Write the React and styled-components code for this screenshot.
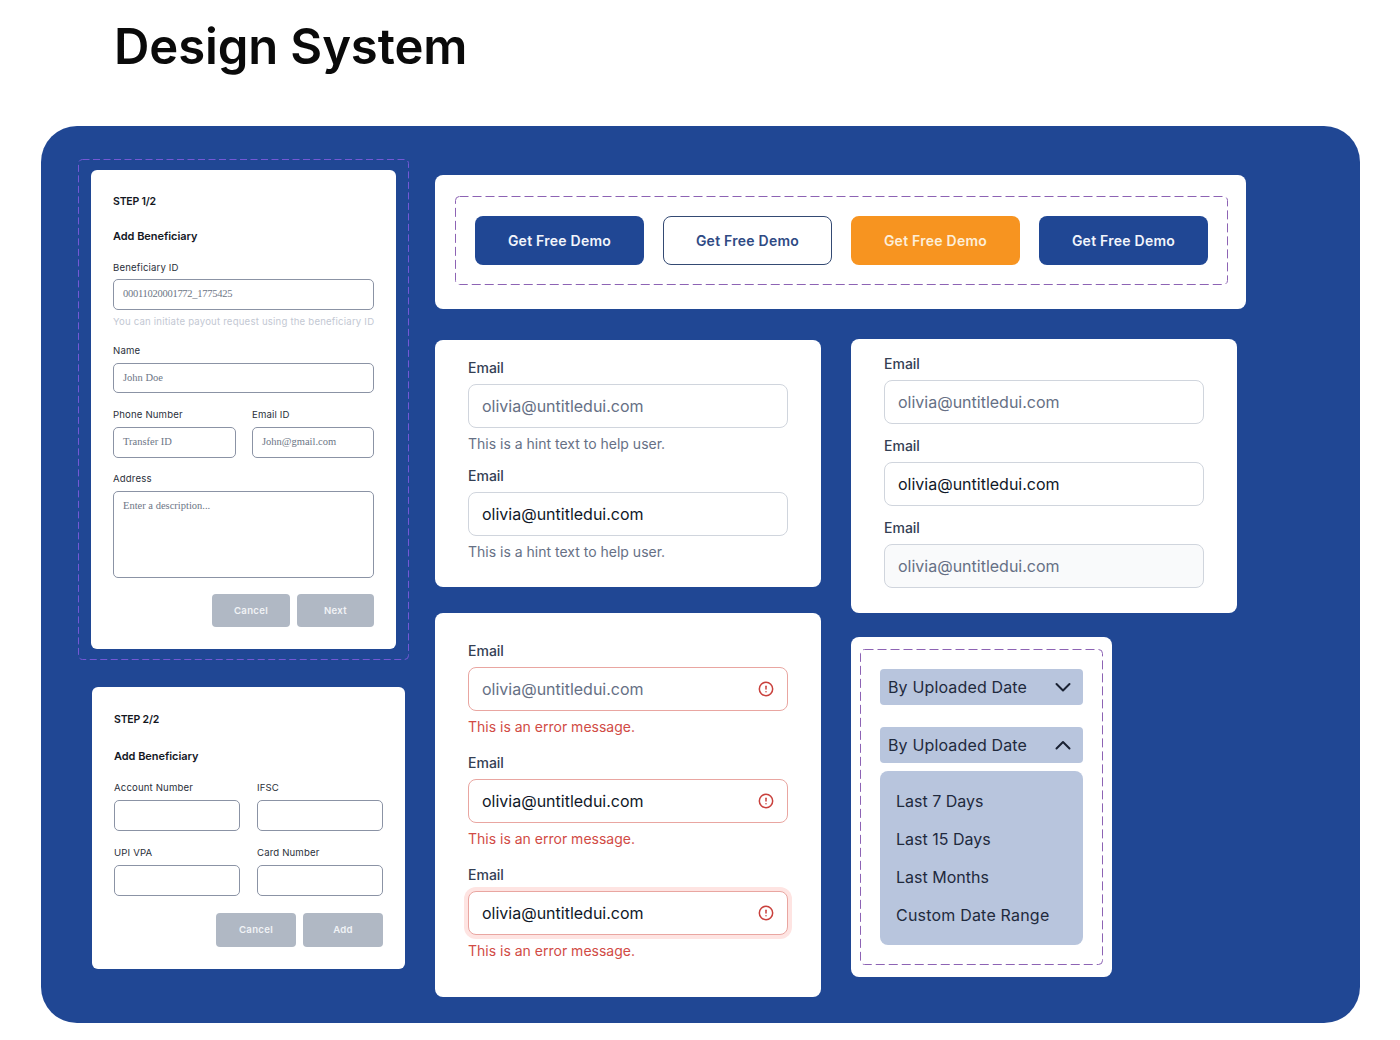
import React from "react"
import styled, { createGlobalStyle } from "styled-components"

const GlobalStyle = createGlobalStyle`
    * { box-sizing: border-box; }
    html, body { margin: 0; padding: 0; background: #fff; }
`

const BLUE = '#204794'
const SANS = `Inter, "Liberation Sans", sans-serif`

const Page = styled.div`
    width: 1400px;
    height: 1040px;
    padding-left: 41px;
    overflow: hidden;
    font-family: ${SANS};
`

const Title = styled.h1`
    margin: 0 0 32px 73px;
    height: 94px;
    line-height: 94px;
    font-family: ${SANS};
    font-size: 49px;
    font-weight: 600;
    letter-spacing: -0.1px;
    color: #0a0a0a;
`

const Panel = styled.div`
    display: flex;
    width: 1319px;
    height: 897px;
    padding: 33px 0 0 37px;
    background: ${BLUE};
    border-radius: 36px;
`

const LeftColumn = styled.div`
    display: flex;
    flex-direction: column;
    width: 357px;
    flex: none;
`

const Dashed = styled.div`
    position: relative;
`

const DashSvg = styled.svg`
    position: absolute;
    top: 0;
    left: 0;
    width: 100%;
    height: 100%;
    pointer-events: none;
    overflow: visible;
`

const DashRect = styled.rect`
    x: 0.5px;
    y: 0.5px;
    width: calc(100% - 1px);
    height: calc(100% - 1px);
    fill: none;
    stroke: ${p => p.$color};
    stroke-width: 1;
    stroke-dasharray: ${p => p.$dash};
`

const DashFrame = ({ color = '#8d63b4', dash = '9 4' }) => (
    <DashSvg aria-hidden="true">
        <DashRect rx="4" $color={color} $dash={dash} />
    </DashSvg>
)

const StepOneFrame = styled(Dashed)`
    width: 331px;
    height: 501px;
    padding: 11px 13px;
    margin-bottom: 27px;
`

const FormCard = styled.div`
    display: flex;
    flex-direction: column;
    background: #fff;
    border-radius: 6px;
    padding: ${p => p.$padding};
    width: ${p => p.$width}px;
    height: ${p => p.$height}px;
    margin-left: ${p => p.$left || 0}px;
`

const Step = styled.div`
    font-size: 10.5px;
    line-height: 14px;
    font-weight: 600;
    letter-spacing: -0.2px;
    color: #14171f;
`

const FormTitle = styled.div`
    margin-top: ${p => p.$top}px;
    font-size: 11px;
    line-height: 14px;
    font-weight: 600;
    letter-spacing: -0.05px;
    color: #14171f;
`

const SmallLabel = styled.div`
    margin-top: ${p => p.$top}px;
    margin-bottom: ${p => p.$bottom}px;
    font-size: 9.6px;
    line-height: 12px;
    letter-spacing: 0.15px;
    color: #2a2f3a;
`

const SmallInput = styled.div`
    display: flex;
    align-items: ${p => (p.$area ? 'flex-start' : 'center')};
    height: ${p => p.$height || 31}px;
    padding: ${p => (p.$area ? '8px 9px' : '0 9px 2px')};
    border: 1px solid #8b93a5;
    border-radius: 5px;
    font-family: "Liberation Serif", serif;
    font-size: 10.5px;
    letter-spacing: ${p => (p.$digits ? '-0.27px' : '0')};
    color: #6d7686;
`

const FieldHint = styled.div`
    margin-top: 6px;
    font-size: 9.6px;
    line-height: 12px;
    letter-spacing: 0.2px;
    white-space: nowrap;
    color: #c3c8d3;
`

const TwoCols = styled.div`
    display: grid;
    grid-template-columns: ${p => p.$cols};
    column-gap: ${p => p.$gap}px;
`

const Actions = styled.div`
    display: flex;
    justify-content: flex-end;
    gap: 7px;
    margin-top: ${p => p.$top}px;
`

const GreyButton = styled.div`
    display: flex;
    align-items: center;
    justify-content: center;
    width: ${p => p.$width}px;
    height: ${p => p.$height}px;
    padding-bottom: 1px;
    background: #b0b8c4;
    border-radius: 4px;
    font-size: 9.6px;
    font-weight: 600;
    letter-spacing: 0.3px;
    color: #f1f3f6;
`

const RightArea = styled.div`
    display: flex;
    flex-direction: column;
    padding-top: 16px;
`

const ButtonCard = styled.div`
    width: 811px;
    height: 134px;
    padding: 21px 18px 24px 20px;
    background: #fff;
    border-radius: 8px;
`

const ButtonFrame = styled(Dashed)`
    display: flex;
    gap: 19px;
    height: 89px;
    padding: 20px 20px;
`

const DemoButton = styled.div`
    display: flex;
    align-items: center;
    justify-content: center;
    width: 169px;
    height: 49px;
    padding-bottom: 1px;
    border-radius: 8px;
    font-size: 14px;
    font-weight: 600;
    letter-spacing: 0.25px;
    background: ${p => (p.$variant === 'outline' ? '#fff' : p.$variant === 'orange' ? '#f79420' : BLUE)};
    border: ${p => (p.$variant === 'outline' ? '1px solid #344a73' : 'none')};
    color: ${p => (p.$variant === 'outline' ? '#2f4a84' : p.$variant === 'orange' ? '#fdeed8' : '#f2f5fb')};
`

const Columns = styled.div`
    display: flex;
    gap: 30px;
`

const Column = styled.div`
    display: flex;
    flex-direction: column;
    padding-top: ${p => p.$top}px;
    gap: ${p => p.$gap}px;
    align-items: flex-start;
`

const WhiteCard = styled.div`
    width: ${p => p.$width || 386}px;
    height: ${p => p.$height}px;
    padding: ${p => p.$padding};
    background: #fff;
    border-radius: 8px;
`

const EmailStack = styled.div`
    display: flex;
    flex-direction: column;
    width: 320px;
    gap: ${p => p.$gap}px;
`

const EmailLabel = styled.div`
    margin-bottom: 6px;
    font-size: 14px;
    line-height: 20px;
    font-weight: 500;
    color: #344054;
`

const EmailInput = styled.div`
    display: flex;
    align-items: center;
    justify-content: space-between;
    height: 44px;
    padding: 0 13px;
    border-radius: 8px;
    font-size: 16px;
    border: 1px solid ${p => (p.$error ? '#e9a6a1' : '#d0d5dd')};
    background: ${p => (p.$disabled ? '#f9fafb' : '#fff')};
    color: ${p => (p.$filled ? '#101828' : '#667085')};
    box-shadow: ${p => (p.$focus ? '0 0 0 4px #fee4e2' : 'none')};
`

const EmailHint = styled.div`
    margin-top: 6px;
    font-size: 14px;
    line-height: 20px;
    color: ${p => (p.$error ? '#d14b45' : '#667085')};
`

const AlertSvg = styled.svg`
    width: 16px;
    height: 16px;
    flex: none;
`

const AlertIcon = () => (
    <AlertSvg viewBox="0 0 16 16" fill="none" stroke="#c9403c" strokeWidth="1.5" strokeLinecap="round" strokeLinejoin="round">
        <circle cx="8" cy="8" r="6.67" />
        <path d="M8 5.33V8" />
        <path d="M8 10.67h.007" />
    </AlertSvg>
)

const DropdownCard = styled.div`
    width: 261px;
    height: 340px;
    padding: 12px 9px;
    background: #fff;
    border-radius: 8px;
`

const DropdownFrame = styled(Dashed)`
    display: flex;
    flex-direction: column;
    height: 316px;
    padding: 20px 20px;
`

const Select = styled.div`
    display: flex;
    align-items: center;
    justify-content: space-between;
    flex: none;
    height: 36px;
    padding: 0 12px 0 8px;
    margin-bottom: ${p => p.$bottom}px;
    background: #b8c5dd;
    border-radius: 4px;
    font-size: 16px;
    letter-spacing: 0.15px;
    color: #1f2a3d;
`

const Chevron = styled.svg`
    width: 16px;
    height: 16px;
    flex: none;
`

const ChevronIcon = ({ up }) => (
    <Chevron viewBox="0 0 16 16" fill="none" stroke="#1a2233" strokeWidth="2" strokeLinecap="round" strokeLinejoin="round">
        <path d={up ? "M1.5 11.5 8 5l6.5 6.5" : "M1.5 5 8 11.5 14.5 5"} />
    </Chevron>
)

const OptionList = styled.div`
    display: flex;
    flex-direction: column;
    justify-content: center;
    height: 174px;
    padding: 0 16px;
    background: #b8c5dd;
    border-radius: 8px;
`

const Option = styled.div`
    height: 38px;
    line-height: 38px;
    font-size: 16px;
    letter-spacing: ${p => p.$spacing || '0'};
    white-space: nowrap;
    color: #1f2a3d;
`

const Email = ({ hint, error, filled, focus, disabled }) => (
    <div>
        <EmailLabel>Email</EmailLabel>
        <EmailInput $error={error} $filled={filled} $focus={focus} $disabled={disabled}>
            olivia@untitledui.com
            {error && <AlertIcon />}
        </EmailInput>
        {hint && <EmailHint $error={error}>{hint}</EmailHint>}
    </div>
)

const HINT = 'This is a hint text to help user.'
const ERROR = 'This is an error message.'

const App = () => (
    <Page>
        <GlobalStyle />
        <Title>Design System</Title>
        <Panel>
            <LeftColumn>
                <StepOneFrame>
                    <DashFrame color="#7358d6" dash="7 3.5" />
                    <FormCard $width={305} $height={479} $padding="25px 22px 0">
                        <Step>STEP 1/2</Step>
                        <FormTitle $top={20}>Add Beneficiary</FormTitle>
                        <SmallLabel $top={19} $bottom={5}>Beneficiary ID</SmallLabel>
                        <SmallInput $digits>00011020001772_1775425</SmallInput>
                        <FieldHint>You can initiate payout request using the beneficiary ID</FieldHint>
                        <SmallLabel $top={17} $bottom={6}>Name</SmallLabel>
                        <SmallInput $height={30}>John Doe</SmallInput>
                        <TwoCols $cols="123px 122px" $gap={16}>
                            <div>
                                <SmallLabel $top={16} $bottom={6}>Phone Number</SmallLabel>
                                <SmallInput>Transfer ID</SmallInput>
                            </div>
                            <div>
                                <SmallLabel $top={16} $bottom={6}>Email ID</SmallLabel>
                                <SmallInput>John@gmail.com</SmallInput>
                            </div>
                        </TwoCols>
                        <SmallLabel $top={15} $bottom={6}>Address</SmallLabel>
                        <SmallInput $area $height={87}>Enter a description...</SmallInput>
                        <Actions $top={16}>
                            <GreyButton $width={78} $height={33}>Cancel</GreyButton>
                            <GreyButton $width={77} $height={33}>Next</GreyButton>
                        </Actions>
                    </FormCard>
                </StepOneFrame>
                <FormCard $width={313} $height={282} $left={14} $padding="26px 22px 0">
                    <Step>STEP 2/2</Step>
                    <FormTitle $top={22}>Add Beneficiary</FormTitle>
                    <TwoCols $cols="126px 126px" $gap={17}>
                        <div>
                            <SmallLabel $top={19} $bottom={6}>Account Number</SmallLabel>
                            <SmallInput />
                        </div>
                        <div>
                            <SmallLabel $top={19} $bottom={6}>IFSC</SmallLabel>
                            <SmallInput />
                        </div>
                        <div>
                            <SmallLabel $top={16} $bottom={6}>UPI VPA</SmallLabel>
                            <SmallInput />
                        </div>
                        <div>
                            <SmallLabel $top={16} $bottom={6}>Card Number</SmallLabel>
                            <SmallInput />
                        </div>
                    </TwoCols>
                    <Actions $top={17}>
                        <GreyButton $width={80} $height={34}>Cancel</GreyButton>
                        <GreyButton $width={80} $height={34}>Add</GreyButton>
                    </Actions>
                </FormCard>
            </LeftColumn>
            <RightArea>
                <ButtonCard>
                    <ButtonFrame>
                        <DashFrame />
                        <DemoButton>Get Free Demo</DemoButton>
                        <DemoButton $variant="outline">Get Free Demo</DemoButton>
                        <DemoButton $variant="orange">Get Free Demo</DemoButton>
                        <DemoButton>Get Free Demo</DemoButton>
                    </ButtonFrame>
                </ButtonCard>
                <Columns>
                    <Column $top={31} $gap={26}>
                        <WhiteCard $height={247} $padding="18px 33px 0">
                            <EmailStack $gap={12}>
                                <Email hint={HINT} />
                                <Email hint={HINT} filled />
                            </EmailStack>
                        </WhiteCard>
                        <WhiteCard $height={384} $padding="28px 33px 0">
                            <EmailStack $gap={16}>
                                <Email hint={ERROR} error />
                                <Email hint={ERROR} error filled />
                                <Email hint={ERROR} error filled focus />
                            </EmailStack>
                        </WhiteCard>
                    </Column>
                    <Column $top={30} $gap={24}>
                        <WhiteCard $height={274} $padding="15px 33px 0">
                            <EmailStack $gap={12}>
                                <Email />
                                <Email filled />
                                <Email disabled />
                            </EmailStack>
                        </WhiteCard>
                        <DropdownCard>
                            <DropdownFrame>
                                <DashFrame />
                                <Select $bottom={22}>By Uploaded Date<ChevronIcon /></Select>
                                <Select $bottom={8}>By Uploaded Date<ChevronIcon up /></Select>
                                <OptionList>
                                    <Option>Last 7 Days</Option>
                                    <Option>Last 15 Days</Option>
                                    <Option>Last Months</Option>
                                    <Option $spacing="0.2px">Custom Date Range</Option>
                                </OptionList>
                            </DropdownFrame>
                        </DropdownCard>
                    </Column>
                </Columns>
            </RightArea>
        </Panel>
    </Page>
)

export default App
